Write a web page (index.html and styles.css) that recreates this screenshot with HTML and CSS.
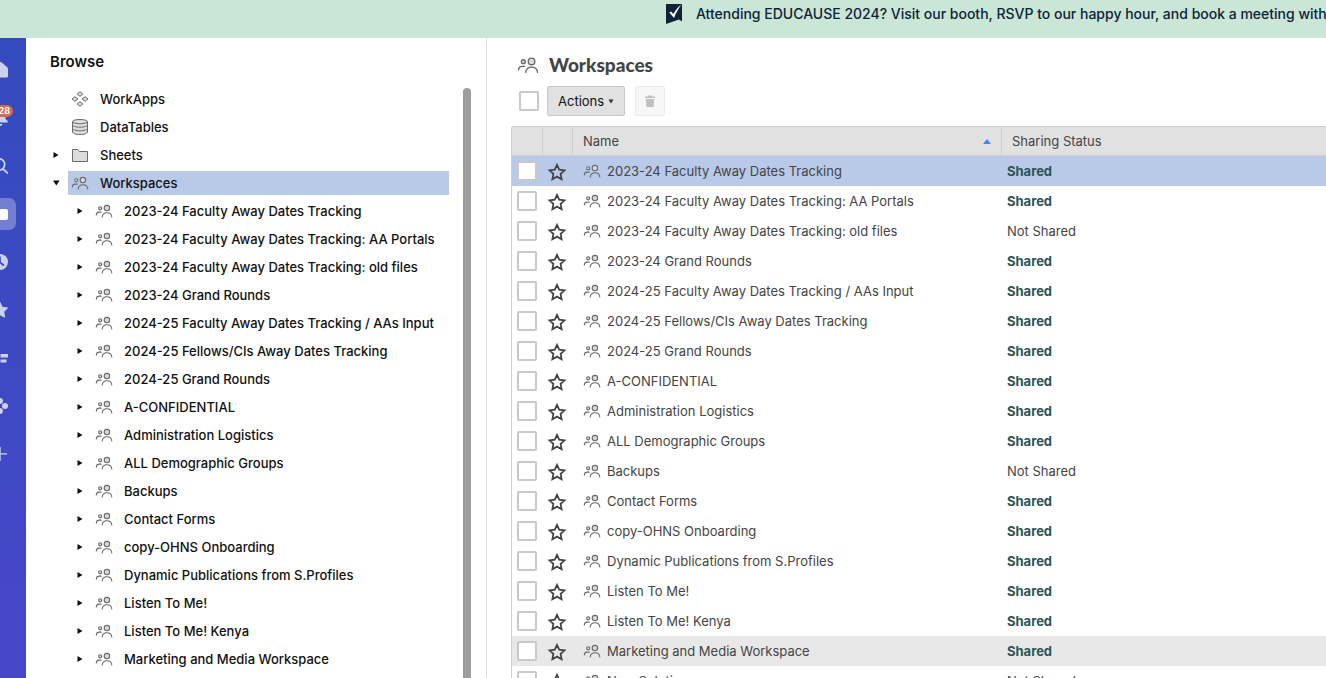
FILE: index.html
```html
<!DOCTYPE html>
<html lang="en">
<head>
<meta charset="utf-8">
<title>Browse Workspaces</title>
<link rel="stylesheet" href="styles.css">
</head>
<body>
<svg class="sprite" aria-hidden="true">
  <symbol id="people" viewBox="0 0 18 16">
    <g fill="#dcdcdc" stroke="#6a6a6a" stroke-width="1.100" stroke-linecap="round">
      <circle cx="5.200" cy="5.300" r="1.600"/><circle cx="11.900" cy="5.100" r="2.700"/>
      <path fill="none" d="M1.300 12c.1-1.900 1.100-2.900 3-2.900h1.900M7.200 14c.2-2.800 1.900-4.200 4.800-4.200s4.600 1.400 4.800 4.200"/>
    </g>
  </symbol>
  <symbol id="star" viewBox="0 0 20 20">
    <path fill="none" stroke="#444" stroke-width="1.800" d="M10 2.800l2.200 4.800 5.300.7-3.900 3.600 1 5.300-4.600-2.600-4.600 2.600 1-5.300-3.900-3.600 5.300-.7z"/>
  </symbol>
  <symbol id="right" viewBox="0 0 6 8"><path fill="#111" d="M0.500 1v6L5.500 4z"/></symbol>
  <symbol id="down" viewBox="0 0 8 6"><path fill="#111" d="M0 .5h6.600L3.300 5.500z"/></symbol>
</svg>

<header class="banner">
  <a class="banner-link" href="#">
    <svg class="banner-icon" viewBox="0 0 16 20" aria-hidden="true"><path fill="#0f2237" d="M0 0h16v17.500l-3-2L0 20z"/><path fill="#fff" d="M3.300 8.500l1.800-.9 2.200 2.400C9.500 6 12 3 15.300.8 12.500 4.500 10.200 8.500 8 14z"/></svg>
    <span>Attending EDUCAUSE 2024? Visit our booth, RSVP to our happy hour, and book a meeting with us!</span>
  </a>
</header>

<div class="app">
  <nav class="rail" aria-label="Main">
    <ul class="rail-list">
      <li><a href="#" aria-label="Home"><svg viewBox="0 0 16 16"><path d="M8 0c1 0 1.500.3 2 .8L15 5c.7.600 1 1.200 1 2v7a1.500 1.500 0 0 1-1.500 1.500h-13A1.500 1.500 0 0 1 0 14V7c0-.8.300-1.400 1-2L6 .8C6.500.3 7 0 8 0z"/></svg></a></li>
      <li><a href="#" aria-label="Notifications"><svg viewBox="0 0 16 16"><path d="M2.500 4a5.500 5.500 0 0 1 11 0v5l2.200 2v1.500H.3V11l2.200-2zM5.500 14h5a2.500 2 0 0 1-5 0z"/></svg><span class="badge">28</span></a></li>
      <li><a href="#" aria-label="Search"><svg viewBox="0 0 16 16"><path fill="none" stroke="#cdd1f0" stroke-width="1.700" d="M10.500 10.500l5.500 5"/><circle cx="7" cy="6.500" r="5.700" fill="none" stroke="#cdd1f0" stroke-width="1.700"/></svg></a></li>
      <li><a class="active" href="#" aria-label="Browse"><svg viewBox="0 0 16 16"><rect y="3" width="16" height="11" rx="2"/></svg></a></li>
      <li><a href="#" aria-label="Recents"><svg viewBox="0 0 16 16"><circle cx="8" cy="8" r="8"/><path fill="none" stroke="#384ac1" stroke-width="1.700" d="M8 2.500v6l4 3"/></svg></a></li>
      <li><a href="#" aria-label="Favorites"><svg viewBox="0 0 16 16"><path stroke="#cdd1f0" stroke-linejoin="round" d="M8 .5l2.300 4.800 5.200.7-3.800 3.800.9 5.400L8 12.700l-4.600 2.500.9-5.400L.5 6l5.200-.7z"/></svg></a></li>
      <li><a href="#" aria-label="Solution center"><svg viewBox="0 0 16 16"><path d="M1 4h5v3H1zM8.500 4h7.500v3.500H8.500zM8.500 9.500h6v3h-6zM1 9.500h5v3H1z"/></svg></a></li>
      <li><a href="#" aria-label="WorkApps"><svg viewBox="0 0 16 16"><circle cx="8" cy="3" r="2.900"/><circle cx="3" cy="8" r="2.900"/><circle cx="13" cy="8" r="3"/><circle cx="8" cy="13" r="2.900"/></svg></a></li>
      <li><a href="#" aria-label="Create"><svg viewBox="0 0 16 16"><path d="M7.500 1h1.200v6.300h6.300v1.300H8.700V15H7.500V8.600H1V7.300h6.500z"/></svg></a></li>
    </ul>
  </nav>

  <aside class="browse">
    <h2 class="browse-title">Browse</h2>
    <div class="browse-body">
      <ul class="tree">
        <li class="node"><span class="twisty"></span><a href="#"><svg class="icon" viewBox="0 0 18 16"><g fill="#dcdcdc" stroke="#6a6a6a" stroke-linejoin="round"><path d="M9 .7l2.800 2.300L9 5.300 6.200 3zM4 5.700L7 8l-3 2.300L1 8zM14 5.700L17 8l-3 2.300L11 8zM9 10.700l2.800 2.300L9 15.300 6.200 13z"/></g></svg>WorkApps</a></li>
        <li class="node"><span class="twisty"></span><a href="#"><svg class="icon" viewBox="0 0 18 16"><g fill="#dcdcdc" stroke="#6a6a6a"><path d="M1.500 2.300v10.900c0 1.200 3.300 2.300 7.500 2.300s7.500-1.100 7.500-2.300V2.300"/><ellipse cx="9" cy="2.600" rx="7.500" ry="2.100"/><path fill="none" d="M1.500 6c0 1.200 3.300 2.200 7.500 2.200s7.500-1 7.500-2.200M1.500 9.600c0 1.200 3.300 2.200 7.500 2.200s7.500-1 7.500-2.200"/></g></svg>DataTables</a></li>
        <li class="node"><button class="twisty" aria-label="Expand"><svg class="right"><use href="#right"/></svg></button><a href="#"><svg class="icon" viewBox="0 0 18 16"><path fill="#dcdcdc" stroke="#6a6a6a" d="M1.500 14.500v-12h5.300l1.700 2h8v10z"/></svg>Sheets</a></li>
        <li class="node"><button class="twisty" aria-label="Collapse"><svg class="down"><use href="#down"/></svg></button><a class="selected" href="#"><svg class="icon"><use href="#people"/></svg>Workspaces</a></li>
        <li class="node child"><button class="twisty" aria-label="Expand"><svg class="right"><use href="#right"/></svg></button><a href="#"><svg class="icon"><use href="#people"/></svg>2023-24 Faculty Away Dates Tracking</a></li>
        <li class="node child"><button class="twisty" aria-label="Expand"><svg class="right"><use href="#right"/></svg></button><a href="#"><svg class="icon"><use href="#people"/></svg>2023-24 Faculty Away Dates Tracking: AA Portals</a></li>
        <li class="node child"><button class="twisty" aria-label="Expand"><svg class="right"><use href="#right"/></svg></button><a href="#"><svg class="icon"><use href="#people"/></svg>2023-24 Faculty Away Dates Tracking: old files</a></li>
        <li class="node child"><button class="twisty" aria-label="Expand"><svg class="right"><use href="#right"/></svg></button><a href="#"><svg class="icon"><use href="#people"/></svg>2023-24 Grand Rounds</a></li>
        <li class="node child"><button class="twisty" aria-label="Expand"><svg class="right"><use href="#right"/></svg></button><a href="#"><svg class="icon"><use href="#people"/></svg>2024-25 Faculty Away Dates Tracking / AAs Input</a></li>
        <li class="node child"><button class="twisty" aria-label="Expand"><svg class="right"><use href="#right"/></svg></button><a href="#"><svg class="icon"><use href="#people"/></svg>2024-25 Fellows/CIs Away Dates Tracking</a></li>
        <li class="node child"><button class="twisty" aria-label="Expand"><svg class="right"><use href="#right"/></svg></button><a href="#"><svg class="icon"><use href="#people"/></svg>2024-25 Grand Rounds</a></li>
        <li class="node child"><button class="twisty" aria-label="Expand"><svg class="right"><use href="#right"/></svg></button><a href="#"><svg class="icon"><use href="#people"/></svg>A-CONFIDENTIAL</a></li>
        <li class="node child"><button class="twisty" aria-label="Expand"><svg class="right"><use href="#right"/></svg></button><a href="#"><svg class="icon"><use href="#people"/></svg>Administration Logistics</a></li>
        <li class="node child"><button class="twisty" aria-label="Expand"><svg class="right"><use href="#right"/></svg></button><a href="#"><svg class="icon"><use href="#people"/></svg>ALL Demographic Groups</a></li>
        <li class="node child"><button class="twisty" aria-label="Expand"><svg class="right"><use href="#right"/></svg></button><a href="#"><svg class="icon"><use href="#people"/></svg>Backups</a></li>
        <li class="node child"><button class="twisty" aria-label="Expand"><svg class="right"><use href="#right"/></svg></button><a href="#"><svg class="icon"><use href="#people"/></svg>Contact Forms</a></li>
        <li class="node child"><button class="twisty" aria-label="Expand"><svg class="right"><use href="#right"/></svg></button><a href="#"><svg class="icon"><use href="#people"/></svg>copy-OHNS Onboarding</a></li>
        <li class="node child"><button class="twisty" aria-label="Expand"><svg class="right"><use href="#right"/></svg></button><a href="#"><svg class="icon"><use href="#people"/></svg>Dynamic Publications from S.Profiles</a></li>
        <li class="node child"><button class="twisty" aria-label="Expand"><svg class="right"><use href="#right"/></svg></button><a href="#"><svg class="icon"><use href="#people"/></svg>Listen To Me!</a></li>
        <li class="node child"><button class="twisty" aria-label="Expand"><svg class="right"><use href="#right"/></svg></button><a href="#"><svg class="icon"><use href="#people"/></svg>Listen To Me! Kenya</a></li>
        <li class="node child"><button class="twisty" aria-label="Expand"><svg class="right"><use href="#right"/></svg></button><a href="#"><svg class="icon"><use href="#people"/></svg>Marketing and Media Workspace</a></li>
      </ul>
      <div class="scrollbar"></div>
    </div>
  </aside>

  <main class="content">
    <div class="heading">
      <svg class="heading-icon"><use href="#people"/></svg>
      <h1>Workspaces</h1>
    </div>
    <div class="toolbar">
      <input class="check" type="checkbox" aria-label="Select all">
      <button class="actions">Actions <svg class="caret" viewBox="0 0 6 5"><path fill="#333" d="M.5.500h5L3 4.500z"/></svg></button>
      <button class="trash" aria-label="Delete" disabled><svg viewBox="0 0 10 12"><path fill="#bfbfbf" d="M0 1.500h3L3.500.5h3L7 1.500h3V3H0zM.8 4h8.400l-.7 8h-7z"/></svg></button>
    </div>
    <table class="grid">
      <colgroup><col class="col-check"><col class="col-star"><col class="col-name"><col></colgroup>
      <thead>
        <tr><th></th><th></th><th><button class="sort">Name <svg viewBox="0 0 8 5"><path fill="#4285f4" d="M4 0l4 5H0z"/></svg></button></th><th>Sharing Status</th></tr>
      </thead>
      <tbody>
        <tr class="selected"><td><input class="check" type="checkbox" aria-label="Select row"></td><td><button class="fav" aria-label="Favorite"><svg><use href="#star"/></svg></button></td><td><a href="#"><svg class="icon"><use href="#people"/></svg>2023-24 Faculty Away Dates Tracking</a></td><td class="shared">Shared</td></tr>
        <tr><td><input class="check" type="checkbox" aria-label="Select row"></td><td><button class="fav" aria-label="Favorite"><svg><use href="#star"/></svg></button></td><td><a href="#"><svg class="icon"><use href="#people"/></svg>2023-24 Faculty Away Dates Tracking: AA Portals</a></td><td class="shared">Shared</td></tr>
        <tr><td><input class="check" type="checkbox" aria-label="Select row"></td><td><button class="fav" aria-label="Favorite"><svg><use href="#star"/></svg></button></td><td><a href="#"><svg class="icon"><use href="#people"/></svg>2023-24 Faculty Away Dates Tracking: old files</a></td><td>Not Shared</td></tr>
        <tr><td><input class="check" type="checkbox" aria-label="Select row"></td><td><button class="fav" aria-label="Favorite"><svg><use href="#star"/></svg></button></td><td><a href="#"><svg class="icon"><use href="#people"/></svg>2023-24 Grand Rounds</a></td><td class="shared">Shared</td></tr>
        <tr><td><input class="check" type="checkbox" aria-label="Select row"></td><td><button class="fav" aria-label="Favorite"><svg><use href="#star"/></svg></button></td><td><a href="#"><svg class="icon"><use href="#people"/></svg>2024-25 Faculty Away Dates Tracking / AAs Input</a></td><td class="shared">Shared</td></tr>
        <tr><td><input class="check" type="checkbox" aria-label="Select row"></td><td><button class="fav" aria-label="Favorite"><svg><use href="#star"/></svg></button></td><td><a href="#"><svg class="icon"><use href="#people"/></svg>2024-25 Fellows/CIs Away Dates Tracking</a></td><td class="shared">Shared</td></tr>
        <tr><td><input class="check" type="checkbox" aria-label="Select row"></td><td><button class="fav" aria-label="Favorite"><svg><use href="#star"/></svg></button></td><td><a href="#"><svg class="icon"><use href="#people"/></svg>2024-25 Grand Rounds</a></td><td class="shared">Shared</td></tr>
        <tr><td><input class="check" type="checkbox" aria-label="Select row"></td><td><button class="fav" aria-label="Favorite"><svg><use href="#star"/></svg></button></td><td><a href="#"><svg class="icon"><use href="#people"/></svg>A-CONFIDENTIAL</a></td><td class="shared">Shared</td></tr>
        <tr><td><input class="check" type="checkbox" aria-label="Select row"></td><td><button class="fav" aria-label="Favorite"><svg><use href="#star"/></svg></button></td><td><a href="#"><svg class="icon"><use href="#people"/></svg>Administration Logistics</a></td><td class="shared">Shared</td></tr>
        <tr><td><input class="check" type="checkbox" aria-label="Select row"></td><td><button class="fav" aria-label="Favorite"><svg><use href="#star"/></svg></button></td><td><a href="#"><svg class="icon"><use href="#people"/></svg>ALL Demographic Groups</a></td><td class="shared">Shared</td></tr>
        <tr><td><input class="check" type="checkbox" aria-label="Select row"></td><td><button class="fav" aria-label="Favorite"><svg><use href="#star"/></svg></button></td><td><a href="#"><svg class="icon"><use href="#people"/></svg>Backups</a></td><td>Not Shared</td></tr>
        <tr><td><input class="check" type="checkbox" aria-label="Select row"></td><td><button class="fav" aria-label="Favorite"><svg><use href="#star"/></svg></button></td><td><a href="#"><svg class="icon"><use href="#people"/></svg>Contact Forms</a></td><td class="shared">Shared</td></tr>
        <tr><td><input class="check" type="checkbox" aria-label="Select row"></td><td><button class="fav" aria-label="Favorite"><svg><use href="#star"/></svg></button></td><td><a href="#"><svg class="icon"><use href="#people"/></svg>copy-OHNS Onboarding</a></td><td class="shared">Shared</td></tr>
        <tr><td><input class="check" type="checkbox" aria-label="Select row"></td><td><button class="fav" aria-label="Favorite"><svg><use href="#star"/></svg></button></td><td><a href="#"><svg class="icon"><use href="#people"/></svg>Dynamic Publications from S.Profiles</a></td><td class="shared">Shared</td></tr>
        <tr><td><input class="check" type="checkbox" aria-label="Select row"></td><td><button class="fav" aria-label="Favorite"><svg><use href="#star"/></svg></button></td><td><a href="#"><svg class="icon"><use href="#people"/></svg>Listen To Me!</a></td><td class="shared">Shared</td></tr>
        <tr><td><input class="check" type="checkbox" aria-label="Select row"></td><td><button class="fav" aria-label="Favorite"><svg><use href="#star"/></svg></button></td><td><a href="#"><svg class="icon"><use href="#people"/></svg>Listen To Me! Kenya</a></td><td class="shared">Shared</td></tr>
        <tr class="hovered"><td><input class="check" type="checkbox" aria-label="Select row"></td><td><button class="fav" aria-label="Favorite"><svg><use href="#star"/></svg></button></td><td><a href="#"><svg class="icon"><use href="#people"/></svg>Marketing and Media Workspace</a></td><td class="shared">Shared</td></tr>
        <tr><td><input class="check" type="checkbox" aria-label="Select row"></td><td><button class="fav" aria-label="Favorite"><svg><use href="#star"/></svg></button></td><td><a href="#"><svg class="icon"><use href="#people"/></svg>New Solution</a></td><td>Not Shared</td></tr>
      </tbody>
    </table>
  </main>
</div>
</body>
</html>
```
FILE: styles.css
```css
* { box-sizing: border-box; }
body {
  margin: 0;
  height: 100vh;
  display: flex;
  flex-direction: column;
  overflow: hidden;
  background: #fff;
  color: #111;
  font: 13px/20px Inter, "Liberation Sans", sans-serif;
}
a { color: inherit; text-decoration: none; }
ul { list-style: none; margin: 0; padding: 0; }
h1, h2 { margin: 0; }
button { font: inherit; color: inherit; padding: 0; border: 0; background: none; }
svg { display: block; flex: none; }
.sprite { position: absolute; width: 0; height: 0; }

.banner {
  flex: none;
  height: 38px;
  padding: 4px 0 0 50%;
  overflow: hidden;
  background: #c9e6d7;
  color: #0f2237;
}
.banner-link {
  display: flex;
  gap: 14px;
  margin-left: 3px;
  white-space: nowrap;
  font-size: 14px;
  font-weight: 500;
}
.banner-icon { width: 16px; height: 20px; }

.app { flex: 1; min-height: 0; display: flex; }

.rail {
  flex: none;
  width: 26px;
  overflow: hidden;
  background: linear-gradient(#344bbf, #4747c9);
}
.rail-list { width: 52px; margin-left: -26px; padding-top: 8px; }
.rail-list li { height: 48px; display: grid; place-items: center; }
.rail-list a {
  position: relative;
  width: 32px;
  height: 32px;
  display: grid;
  place-items: center;
  border-radius: 7px;
  fill: #cdd1f0;
}
.rail-list svg { width: 16px; height: 16px; }
.rail-list .active { background: #727fd2; fill: #fff; }
.badge {
  position: absolute;
  top: 3px;
  right: 3px;
  padding: 0 3px;
  border-radius: 6px;
  background: #d96b50;
  color: #fff;
  font-size: 9px;
  line-height: 12px;
  font-weight: 700;
}

.browse {
  flex: none;
  width: 461px;
  display: flex;
  flex-direction: column;
  padding-top: 14px;
  border-right: 1px solid #e0e0e0;
}
.browse-title { padding-left: 24px; font-size: 15px; line-height: 20px; font-weight: 600; }
.browse-body {
  flex: 1;
  min-height: 0;
  display: flex;
  gap: 14px;
  padding: 13px 15px 0 24px;
  overflow: hidden;
}
.tree { flex: 1; }
.node { display: flex; align-items: center; height: 28px; font-weight: 500; }
.node.child { padding-left: 24px; }
.twisty { width: 18px; height: 24px; display: flex; align-items: center; padding-left: 3px; }
.right { width: 6px; height: 8px; }
.down { width: 8px; height: 6px; }
.node a {
  flex: 1;
  display: flex;
  align-items: center;
  gap: 11px;
  height: 24px;
  padding-left: 3px;
  white-space: nowrap;
}
.node .selected { background: #b9c9e8; }
.icon { width: 18px; height: 16px; }
.scrollbar { width: 8px; margin-top: 3px; border-radius: 4px 4px 0 0; background: #9e9e9e; }

.content { flex: 1; min-width: 0; padding: 16px 0 0 24px; overflow: hidden; }
.heading { display: flex; align-items: center; gap: 10px; padding-left: 6px; height: 22px; color: #444; }
.heading-icon { width: 22px; height: 20px; }
.heading h1 { font-family: Lato, Inter, sans-serif; font-size: 19px; line-height: 22px; font-weight: 900; }
.toolbar { display: flex; align-items: center; padding: 10px 0 10px 8px; }
.check {
  appearance: none;
  display: block;
  width: 20px;
  height: 20px;
  margin: 0;
  border: 2px solid #c8c8c8;
  border-radius: 2px;
  background: #fff;
}
.actions {
  display: flex;
  align-items: center;
  gap: 4px;
  height: 30px;
  margin-left: 8px;
  padding: 0 10px;
  border: 1px solid #c8c8c8;
  border-radius: 2px;
  background: #e1e1e1;
}
.caret { width: 6px; height: 5px; }
.trash {
  width: 30px;
  height: 30px;
  display: grid;
  place-items: center;
  margin-left: 10px;
  border: 1px solid #ebebeb;
  border-radius: 2px;
  background: #f7f7f7;
}
.trash svg { width: 10px; height: 12px; }

.grid {
  width: 100%;
  table-layout: fixed;
  border-collapse: separate;
  border-spacing: 0;
  border-left: 1px solid #d0d0d0;
  border-radius: 2px 0 0 0;
  color: #444;
}
.col-check { width: 31px; }
.col-star { width: 30px; }
.col-name { width: 429px; }
.grid th {
  height: 30px;
  padding: 0 10px;
  border: solid #cecece;
  border-width: 1px 1px 1px 0;
  background: #e1e1e1;
  text-align: left;
  font-weight: 400;
}
.grid th:last-child { border-right: 0; }
.grid td { height: 30px; padding: 0 5px; white-space: nowrap; }
.sort { display: flex; align-items: center; justify-content: space-between; width: 100%; }
.sort svg { width: 8px; height: 5px; }
.grid td:nth-child(2) { padding: 0 4px; }
.grid td:nth-child(3) { padding-left: 10px; }
.grid td a { display: flex; align-items: center; gap: 6px; }
.fav { display: block; padding-top: 2px; }
.fav svg { width: 20px; height: 20px; }
.grid .shared { color: #2c5558; font-weight: 700; }
.grid .selected td { background: #b9c9e8; }
.grid .hovered td { background: #e8e8e8; }
```
